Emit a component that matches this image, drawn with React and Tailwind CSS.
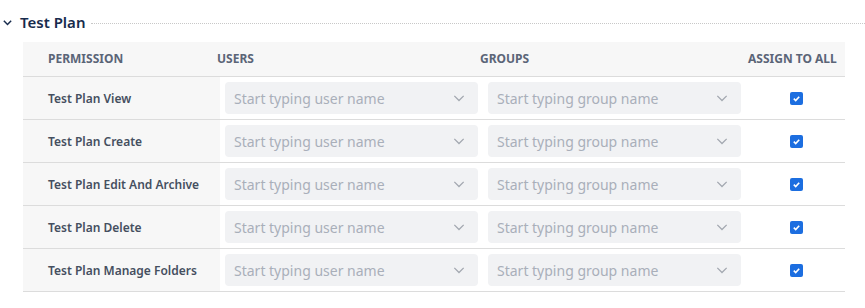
import React from "react";

const rows = [
  "Test Plan View",
  "Test Plan Create",
  "Test Plan Edit And Archive",
  "Test Plan Delete",
  "Test Plan Manage Folders",
];

const Chevron = ({ className, width = 1.3 }) => (
  <svg viewBox="0 0 12 12" className={className} fill="none" stroke="currentColor" strokeWidth={width}>
    <path d="M2 4.2 6 8.2l4-4" />
  </svg>
);

const Select = ({ placeholder }) => (
  <div className="flex h-8 items-center justify-between rounded bg-[#f1f2f4] pl-[9px] pr-[12px]">
    <span className="text-[14px] text-[#a9afba]">{placeholder}</span>
    <Chevron className="h-[14px] w-[14px] text-[#a3a8b0]" width={1.1} />
  </div>
);

const Checkbox = () => (
  <div className="flex h-[13px] w-[13px] items-center justify-center rounded-[2px] bg-[#1c6ee0]">
    <svg viewBox="0 0 10 10" className="h-[9px] w-[9px]" fill="none" stroke="white" strokeWidth="1.8">
      <path d="M2 5.2 4.1 7.2 8 3" />
    </svg>
  </div>
);

export default function App() {
  return (
    <div className="w-[865px] h-[308px] bg-white font-['Noto_Sans',sans-serif]">
      {/* Section title */}
      <div className="flex items-center pt-[11px] h-[33px]">
        <Chevron className="ml-[2px] h-[11px] w-[11px] text-[#172b4d]" width={1.6} />
        <span className="ml-[7px] text-[15px] font-semibold text-[#172b4d] leading-5">Test Plan</span>
        <div className="ml-[6px] flex-1 border-t border-dotted border-[#c8c8c8] mt-[2px]" />
      </div>

      <div className="ml-[23px] mt-[9px] w-[822px]">
        {/* Header */}
        <div className="grid grid-cols-[197px_263px_263px_1fr] h-[35px] items-center bg-[#f7f7f7] border-b border-[#dcdcdc] text-[12px] font-bold text-[#5b6577]">
          <div className="pl-[25px]">PERMISSION</div>
          <div className="-ml-[3px]">USERS</div>
          <div className="-ml-[3px]">GROUPS</div>
          <div className="pl-[2px] whitespace-nowrap">ASSIGN TO ALL</div>
        </div>

        {rows.map((name) => (
          <div
            key={name}
            className="grid grid-cols-[197px_263px_263px_1fr] h-[43px] border-b border-[#dcdcdc]"
          >
            <div className="flex items-center bg-[#f7f7f7] pl-[25px] pt-[1px] text-[12px] font-semibold text-[#454f60]">
              {name}
            </div>
            <div className="flex flex-col justify-center px-[5px]">
              <Select placeholder="Start typing user name" />
            </div>
            <div className="flex flex-col justify-center px-[5px]">
              <Select placeholder="Start typing group name" />
            </div>
            <div className="flex items-center justify-center pl-[2px]">
              <Checkbox />
            </div>
          </div>
        ))}
      </div>
    </div>
  );
}
